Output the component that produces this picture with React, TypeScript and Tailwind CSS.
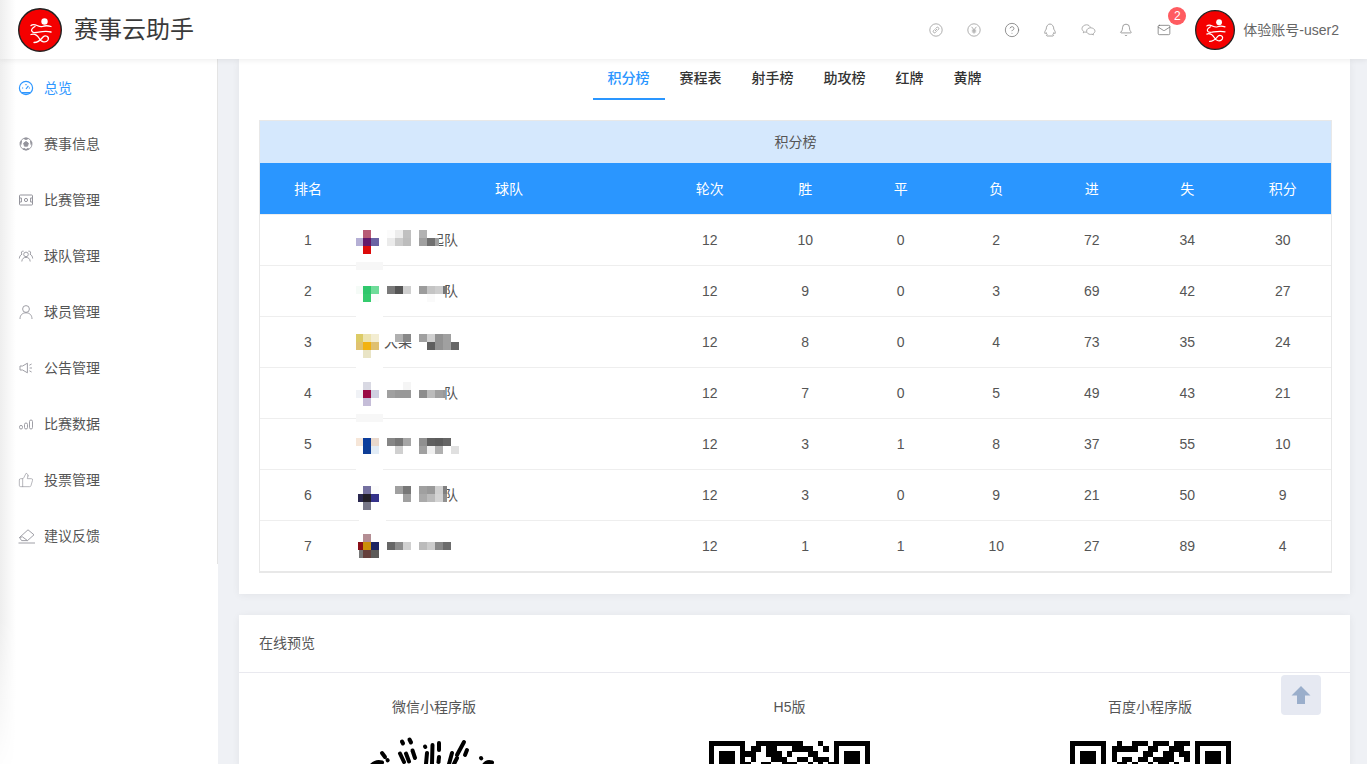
import React from "react";
import { Bell, CircleHelp, Mail, ThumbsUp } from "lucide-react";

type Block = [number, number, string, number?];

interface Team {
  rank: number;
  label: string;
  labelClass: string;
  stats: number[];
  blocks: Block[];
}

const teams: Team[] = [
  {
    rank: 1,
    label: "起队",
    labelClass: "pl-[74px]",
    stats: [12, 10, 0, 2, 72, 34, 30],
    blocks: [
      [363, 230, "#b85a75"], [356, 238, "#b5b0d5", 7], [363, 238, "#63186a"], [371, 238, "#6b63a3"], [363, 246, "#dc0a0a"],
      [387, 230, "#fbfbfb"], [395, 230, "#ececec"], [403, 230, "#c0c0c0"], [387, 238, "#ebebeb"], [395, 238, "#cccccc"], [403, 238, "#bdbdbd"],
      [427, 230, "#ffffff", 10], [419, 230, "#b3b3b3"], [419, 238, "#a0a0a0"], [427, 238, "#707070"], [435, 238, "#a0a0a0", 4], [427, 246, "#ffffff", 9],
      [356, 262, "#f7f7f7", 27],
    ],
  },
  {
    rank: 2,
    label: "队",
    labelClass: "pl-[88px]",
    stats: [12, 9, 0, 3, 69, 42, 27],
    blocks: [
      [356, 286, "#f5fbf7", 7], [363, 286, "#2fc76c"], [371, 286, "#6fdc9a"], [363, 294, "#35cb6e"], [371, 294, "#fbfdfc"],
      [387, 286, "#7a7a7a"], [395, 286, "#555555"], [403, 286, "#d0d0d0"],
      [419, 286, "#9c9c9c"], [427, 286, "#c4c4c4"], [435, 286, "#cdcdcd"], [443, 286, "#777777", 4], [427, 294, "#fafafa"],
      [356, 315, "#ffffff", 27],
    ],
  },
  {
    rank: 3,
    label: "大果",
    labelClass: "pl-[28px]",
    stats: [12, 8, 0, 4, 73, 35, 24],
    blocks: [
      [356, 334, "#dccb66", 7], [363, 334, "#ece3b0"], [371, 334, "#f3edd2"],
      [356, 342, "#e0c270", 7], [363, 342, "#f2b211"], [371, 342, "#dfc070"], [363, 350, "#e9e4c5"],
      [383, 334, "#ffffff", 12], [395, 334, "#b0b0b0"], [403, 334, "#888888"],
      [419, 334, "#a0a0a0"], [427, 334, "#d0d0d0"], [435, 334, "#929292"], [443, 334, "#a0a0a0"],
      [427, 342, "#5f5f5f"], [435, 342, "#929292"], [443, 342, "#a0a0a0"], [451, 342, "#666666"],
      [356, 366, "#ffffff", 27],
    ],
  },
  {
    rank: 4,
    label: "队",
    labelClass: "pl-[88px]",
    stats: [12, 7, 0, 5, 49, 43, 21],
    blocks: [
      [363, 382, "#d9d9e3"], [356, 390, "#f0f2f6", 7], [363, 390, "#9a0a45"], [371, 390, "#cfcfe0"], [363, 398, "#c5bdd8"],
      [403, 382, "#f5f5f5"], [387, 390, "#a0a0a0"], [395, 390, "#999999"], [403, 390, "#999999"],
      [419, 390, "#8c8c8c"], [427, 390, "#bbbbbb"], [435, 390, "#a0a0a0"], [443, 390, "#999999", 3],
      [356, 414, "#f7f7f7", 27],
    ],
  },
  {
    rank: 5,
    label: "",
    labelClass: "",
    stats: [12, 3, 1, 8, 37, 55, 10],
    blocks: [
      [356, 438, "#f6e6d8", 7], [363, 438, "#0c3d9c"], [371, 438, "#e8d8cc"], [363, 446, "#0e3d96"], [371, 446, "#e2ecf6"],
      [387, 438, "#868686"], [395, 438, "#777777"], [403, 438, "#a6a6a6"], [395, 446, "#d0d0d0"],
      [419, 438, "#909090"], [427, 438, "#606060"], [435, 438, "#5c5c5c"], [443, 438, "#666666"],
      [419, 446, "#a0a0a0"], [427, 446, "#f0f0f0"], [435, 446, "#b0b0b0"], [451, 446, "#e0e0e0"],
      [356, 468, "#ffffff", 27],
    ],
  },
  {
    rank: 6,
    label: "队",
    labelClass: "pl-[88px]",
    stats: [12, 3, 0, 9, 21, 50, 9],
    blocks: [
      [363, 486, "#7470a0"], [371, 486, "#fcfcfc"], [358, 494, "#2a2850", 5], [363, 494, "#221f28"], [371, 494, "#35328a"], [363, 502, "#777788"],
      [395, 486, "#a0a0a0"], [403, 486, "#777777"], [403, 494, "#a0a0a0"],
      [419, 486, "#a0a0a0"], [427, 486, "#999999"], [435, 486, "#d0d0d0"], [443, 486, "#808080", 4],
      [419, 494, "#aaaaaa"], [427, 494, "#bbbbbb"], [435, 494, "#d4d4d4"], [443, 494, "#909090", 4],
      [359, 519, "#ffffff", 27],
    ],
  },
  {
    rank: 7,
    label: "",
    labelClass: "",
    stats: [12, 1, 1, 10, 27, 89, 4],
    blocks: [
      [363, 534, "#b48e94"], [358, 542, "#8a0f18", 5], [363, 542, "#cc8e08"], [371, 542, "#1c2463"],
      [359, 550, "#777777", 4], [363, 550, "#66403c"], [371, 550, "#5c5a58"],
      [387, 542, "#666666"], [395, 542, "#8c8c8c"], [403, 542, "#d0d0d0"],
      [419, 542, "#bbbbbb"], [427, 542, "#cccccc"], [435, 542, "#888888"], [443, 542, "#6c6c6c"],
    ],
  },
];

const columns = ["排名", "球队", "轮次", "胜", "平", "负", "进", "失", "积分"];
const tabs = ["积分榜", "赛程表", "射手榜", "助攻榜", "红牌", "黄牌"];

const Logo = ({ className }: { className: string }) => (
  <svg viewBox="0 0 44 44" className={className}>
    <circle cx="22" cy="22" r="21.3" fill="#f40000" stroke="#222" strokeWidth="1.4" />
    <circle cx="26.5" cy="13.5" r="3.2" fill="#fff" />
    <g fill="none" stroke="#fff" strokeWidth="1.3" strokeLinecap="round">
      <path d="M13 17.5C17 14 20 20 24.5 18.5C27 17.5 30 17.5 33 18.5" />
      <path d="M17 18.5C11 22 14 25 18 24.5C22 24 27 22.5 33 24" />
      <path d="M13 26.5C17 25 19 27 21 30C23 34.5 28 35 30 32C31.5 28.5 27.5 26.5 25 29C23 31.5 21 34.5 16 34.5" />
    </g>
  </svg>
);

const iconProps = {
  viewBox: "0 0 16 16",
  fill: "none",
  stroke: "currentColor",
  strokeWidth: 0.9,
  className: "w-4 h-4",
};

const Dial = () => (
  <svg viewBox="0 0 16 16" fill="none" stroke="currentColor" strokeWidth="1.2" className="w-4 h-4">
    <circle cx="8" cy="8" r="6.6" />
    <path d="M3.6 12.8H12.4" strokeWidth="1.6" />
    <path d="M4 8H5.2M10.8 8H12M8 4V5.2M8 9L10.4 5.8" />
  </svg>
);

const Football = () => (
  <svg {...iconProps}>
    <circle cx="8" cy="8" r="6" />
    <path d="M8 5.4L10.4 7.2L9.5 10.2H6.5L5.6 7.2Z" fill="currentColor" />
    <path d="M5.8 2.6L8 3.6L10.2 2.6L8 2ZM2.2 6.4L3.6 5L2.9 8.6ZM13.8 6.4L12.4 5L13.1 8.6ZM5 13L7 12.6L8 14ZM11 13L9 12.6L8 14Z" fill="currentColor" />
  </svg>
);

const Pitch = () => (
  <svg {...iconProps} strokeWidth={1}>
    <rect x="1.5" y="3" width="13" height="10" rx="0.8" />
    <path d="M1.5 6H3.4V10H1.5M14.5 6H12.6V10H14.5" />
    <circle cx="8" cy="8" r="1.6" />
  </svg>
);

const Group = () => (
  <svg {...iconProps}>
    <circle cx="8" cy="6.4" r="2.3" />
    <path d="M3.8 13.5C4 10.6 5.8 9.4 8 9.4S12 10.6 12.2 13.5" />
    <path d="M5.6 3.2C3.6 2.4 2.6 5 4 6.2C2.4 7 1.5 8.4 1.3 10.5M10.4 3.2C12.4 2.4 13.4 5 12 6.2C13.6 7 14.5 8.4 14.7 10.5" />
  </svg>
);

const Person = () => (
  <svg {...iconProps}>
    <circle cx="8" cy="5" r="3.4" />
    <path d="M2 15C2 11 4.5 8.8 8 8.8S14 11 14 15" />
  </svg>
);

const Speaker = () => (
  <svg {...iconProps}>
    <path d="M2 6H4.6L9.4 3.2V12.8L4.6 10H2Z" />
    <path d="M11.4 5.2L13.6 4M11.6 8H14M11.4 10.8L13.6 12" />
  </svg>
);

const Bars = () => (
  <svg {...iconProps}>
    <rect x="1.5" y="9.4" width="3" height="3.6" rx="1.5" />
    <rect x="6.5" y="7" width="3" height="6" rx="1.5" />
    <rect x="11.5" y="4" width="3" height="9" rx="1.5" />
  </svg>
);

const Feedback = () => (
  <svg viewBox="0 0 18 16" fill="none" stroke="currentColor" strokeWidth="0.9" className="w-[18px] h-4">
    <path d="M1.5 9.5L10 1.8L16 6.8L9.5 12.6H3.6Z" />
    <path d="M1.5 9.5L4.4 8.8L9.5 12.6M0.5 15H17" />
  </svg>
);

const sideItems: { label: string; icon: React.ReactNode; active?: boolean }[] = [
  { label: "总览", icon: <Dial />, active: true },
  { label: "赛事信息", icon: <Football /> },
  { label: "比赛管理", icon: <Pitch /> },
  { label: "球队管理", icon: <Group /> },
  { label: "球员管理", icon: <Person /> },
  { label: "公告管理", icon: <Speaker /> },
  { label: "比赛数据", icon: <Bars /> },
  { label: "投票管理", icon: <ThumbsUp size={16} strokeWidth={1} /> },
  { label: "建议反馈", icon: <Feedback /> },
];

const LinkCircle = () => (
  <svg viewBox="0 0 14 14" fill="none" stroke="currentColor" strokeWidth="0.8" className="w-[14px] h-[14px]">
    <circle cx="7" cy="7" r="6.2" />
    <path d="M6 8L8 6M5.7 6.4L4.6 7.5A1.3 1.3 0 0 0 6.5 9.4L7.6 8.3M6.4 5.7L7.5 4.6A1.3 1.3 0 0 1 9.4 6.5L8.3 7.6" />
  </svg>
);

const YenCircle = () => (
  <svg viewBox="0 0 14 14" fill="none" stroke="currentColor" strokeWidth="0.8" className="w-[14px] h-[14px]">
    <circle cx="7" cy="7" r="6.2" />
    <path d="M4.6 3.8L7 6.8L9.4 3.8M7 6.8V10.6M4.8 7.2H9.2M4.8 8.9H9.2" />
  </svg>
);

const QqOutline = () => (
  <svg viewBox="0 0 14 14" fill="none" stroke="currentColor" strokeWidth="0.9" className="w-[14px] h-[14px]">
    <path d="M3.2 6.2C3.2 3.4 4.8 1 7 1S10.8 3.4 10.8 6.2C11.8 7.6 12.6 9.2 12.2 10.4C11.8 10.8 11.2 10.2 10.8 9.6C10.6 10.6 10.2 11.2 9.8 11.6C10.6 12 10.8 12.6 10 13H4C3.2 12.6 3.4 12 4.2 11.6C3.8 11.2 3.4 10.6 3.2 9.6C2.8 10.2 2.2 10.8 1.8 10.4C1.4 9.2 2.2 7.6 3.2 6.2Z" />
  </svg>
);

const WechatOutline = () => (
  <svg viewBox="0 0 15 14" fill="none" stroke="currentColor" strokeWidth="0.8" className="w-[15px] h-[14px]">
    <path d="M9.4 4.6C8.9 2.8 7.4 1.8 5.6 1.8C3.2 1.8 1 3.4 1 5.6C1 6.8 1.7 7.8 2.7 8.5L2.3 9.8L3.8 9C4.4 9.2 5 9.3 5.6 9.3" />
    <path d="M9.6 4.8C7.4 4.8 5.6 6.2 5.6 8.1S7.4 11.4 9.6 11.4C10.1 11.4 10.6 11.3 11 11.2L12.4 12L12 10.7C13.2 10.1 14 9.2 14 8.1C14 6.2 11.8 4.8 9.6 4.8Z" />
  </svg>
);

const finder = ["1111111", "1000001", "1011101", "1011101", "1011101"];

const QrTop = ({ rows }: { rows: string[] }) => (
  <svg viewBox="0 0 161 26" className="w-[161px] h-[26px]" shapeRendering="crispEdges">
    {rows.map((mid, y) =>
      (finder[y] + mid + finder[y]).split("").map((cell, x) =>
        cell === "1" ? (
          <rect key={`${x}-${y}`} x={x * 5.194} y={y * 5.2} width="5.3" height="5.3" fill="#000" />
        ) : null
      )
    )}
  </svg>
);

const miniBars = [
  "M403 741.5L404 743.5", "M410.5 739.5L412 742.5", "M401 753.5L405 762", "M407 753.5L410 761.5", "M413.5 750.5L416 758",
  "M426 746.5L426.3 747", "M428 753L427 764", "M433.5 745L433 764", "M440 743L440 750", "M440 757L439.5 762",
  "M465 742L458 755", "M453 753L450 764", "M468 750L466 755", "M458 758L455 764",
  "M383 753L386 757", "M388.5 760L388.7 760.3", "M373 765C376 762 380 761.5 383 762.5", "M482 758L482.3 758.3", "M485 765C487 762 490 761.5 493 762.5",
];

const MiniCode = () => (
  <svg viewBox="365 736 138 28" className="w-[138px] h-7">
    {miniBars.map((d) => (
      <path key={d} d={d} fill="none" stroke="#000" strokeWidth="4" strokeLinecap="round" />
    ))}
  </svg>
);

export default function App() {
  return (
    <div className="relative h-[764px] overflow-hidden flex flex-col bg-[#eff1f5] text-sm text-[#555] font-['Liberation_Sans','Noto_Sans_CJK_SC',sans-serif]">
      <header className="relative z-20 h-[59px] flex items-center shrink-0 bg-white shadow-[0_1px_6px_rgba(0,0,0,0.08)]">
        <div className="absolute left-0 top-0 h-full w-4 bg-gradient-to-r from-[#eeeeee] to-white" />
        <Logo className="relative ml-[18px] w-11 h-11" />
        <div className="ml-3 text-2xl leading-none text-[#3a3a3a]">赛事云助手</div>
        <div className="ml-auto flex items-center text-[#9a9a9a]">
          {[
            <LinkCircle key="a" />,
            <YenCircle key="b" />,
            <CircleHelp key="c" size={16} strokeWidth={1.2} className="text-[#777]" />,
            <QqOutline key="d" />,
            <WechatOutline key="e" />,
            <Bell key="f" size={14} strokeWidth={1.2} className="text-[#777]" />,
          ].map((icon, i) => (
            <div key={i} className="w-[38px] flex justify-center">
              {icon}
            </div>
          ))}
          <div className="relative w-[38px] flex justify-center">
            <Mail size={14} strokeWidth={1.2} className="text-[#666]" />
            <span className="absolute left-[23px] top-[-16px] w-[18px] h-[18px] rounded-full bg-[#ff5b60] text-white text-xs leading-[18px] text-center">2</span>
          </div>
        </div>
        <Logo className="ml-3 w-10 h-10" />
        <div className="ml-2 mr-[28px] text-[#666]">体验账号-user2</div>
      </header>

      <div className="flex flex-1 min-h-0">
        <aside className="relative w-[218px] shrink-0 bg-white">
          <div className="absolute left-0 top-0 w-4 h-[720px] bg-gradient-to-r from-[#eeeeee] to-white [mask-image:linear-gradient(180deg,#000_560px,transparent)]" />
          <nav className="relative h-[505px] border-r border-[#e4e4e4] pt-px">
            {sideItems.map((item) => (
              <div key={item.label} className={`h-14 flex items-center pl-[18px] ${item.active ? "text-[#2f97ff]" : "text-[#555]"}`}>
                <span className={`w-[26px] flex items-center ${item.active ? "text-[#2f97ff]" : "text-[#94949c]"}`}>{item.icon}</span>
                {item.label}
              </div>
            ))}
          </nav>
        </aside>

        <main className="flex-1 min-w-0 pl-[21px] pr-[17px]">
          <section className="h-[535px] bg-white pl-5 pr-[18px] shadow-[0_1px_8px_rgba(0,0,0,0.06)]">
            <div className="h-[61px] pr-[2px] flex justify-center items-start font-medium text-[#333]">
              {tabs.map((tab, i) => (
                <div key={tab} className={`h-[41px] px-[15px] leading-[38px] border-b-2 ${i === 0 ? "border-[#2a96ff] text-[#2a96ff]" : "border-transparent"}`}>
                  {tab}
                </div>
              ))}
            </div>

            <div className="border-x border-t border-b-2 border-[#e8e8e8]">
              <div className="h-[42px] flex items-center justify-center bg-[#d5e8fd]">积分榜</div>
              <div className="h-[51px] grid grid-cols-[96px_306px_repeat(7,95.5px)] items-center text-center text-white bg-[#2a96ff]">
                {columns.map((col) => (
                  <div key={col}>{col}</div>
                ))}
              </div>
              {teams.map((team) => {
                const top = 214 + (team.rank - 1) * 51;
                return (
                  <div key={team.rank} className="h-[51px] grid grid-cols-[96px_306px_repeat(7,95.5px)] items-center text-center border-t border-[#eeeeee] first:border-t-0">
                    <div>{team.rank}</div>
                    <div className="relative h-full flex items-center text-left">
                      <span className={team.labelClass}>{team.label}</span>
                      <svg viewBox={`356 ${top + 1} 110 50`} className="absolute left-0 top-0 w-[110px] h-[50px] overflow-visible" shapeRendering="crispEdges">
                        {team.blocks.map(([x, y, color, w], i) => (
                          <rect key={i} x={x} y={y} width={w ?? 8} height="8" fill={color} />
                        ))}
                      </svg>
                    </div>
                    {team.stats.map((value, i) => (
                      <div key={i}>{value}</div>
                    ))}
                  </div>
                );
              })}
            </div>
          </section>

          <section className="mt-[21px] bg-white shadow-[0_1px_8px_rgba(0,0,0,0.06)]">
            <div className="h-[58px] pl-5 pb-0.5 flex items-center border-b border-[#e9e9ef]">在线预览</div>
            <div className="flex">
              <div className="w-[390px] pt-6 flex flex-col items-center">
                <div className="h-5 leading-5">微信小程序版</div>
                <div className="mt-[19px] -translate-x-px">
                  <MiniCode />
                </div>
              </div>
              <div className="w-[321px] pt-6 flex flex-col items-center">
                <div className="h-5 leading-5">H5版</div>
                <div className="mt-6">
                  <QrTop rows={["00111111111000100", "01101100011110010", "11001110100011000", "01000111001101110", "10011001110010101"]} />
                </div>
              </div>
              <div className="w-[400px] pt-6 flex flex-col items-center">
                <div className="h-5 leading-5">百度小程序版</div>
                <div className="mt-6">
                  <QrTop rows={["00100111011101110", "01111100110011100", "01000001100110110", "01011011011110010", "00110100101101000"]} />
                </div>
              </div>
            </div>
          </section>
        </main>
      </div>

      <div className="absolute left-[1281px] top-[675px] w-10 h-10 rounded-sm bg-[#e6e9f2] flex items-center justify-center">
        <svg viewBox="0 0 20 20" className="w-5 h-5">
          <path d="M10 1L19.5 10.5H14V19H6V10.5H0.5Z" fill="#9aaecb" />
        </svg>
      </div>
    </div>
  );
}
